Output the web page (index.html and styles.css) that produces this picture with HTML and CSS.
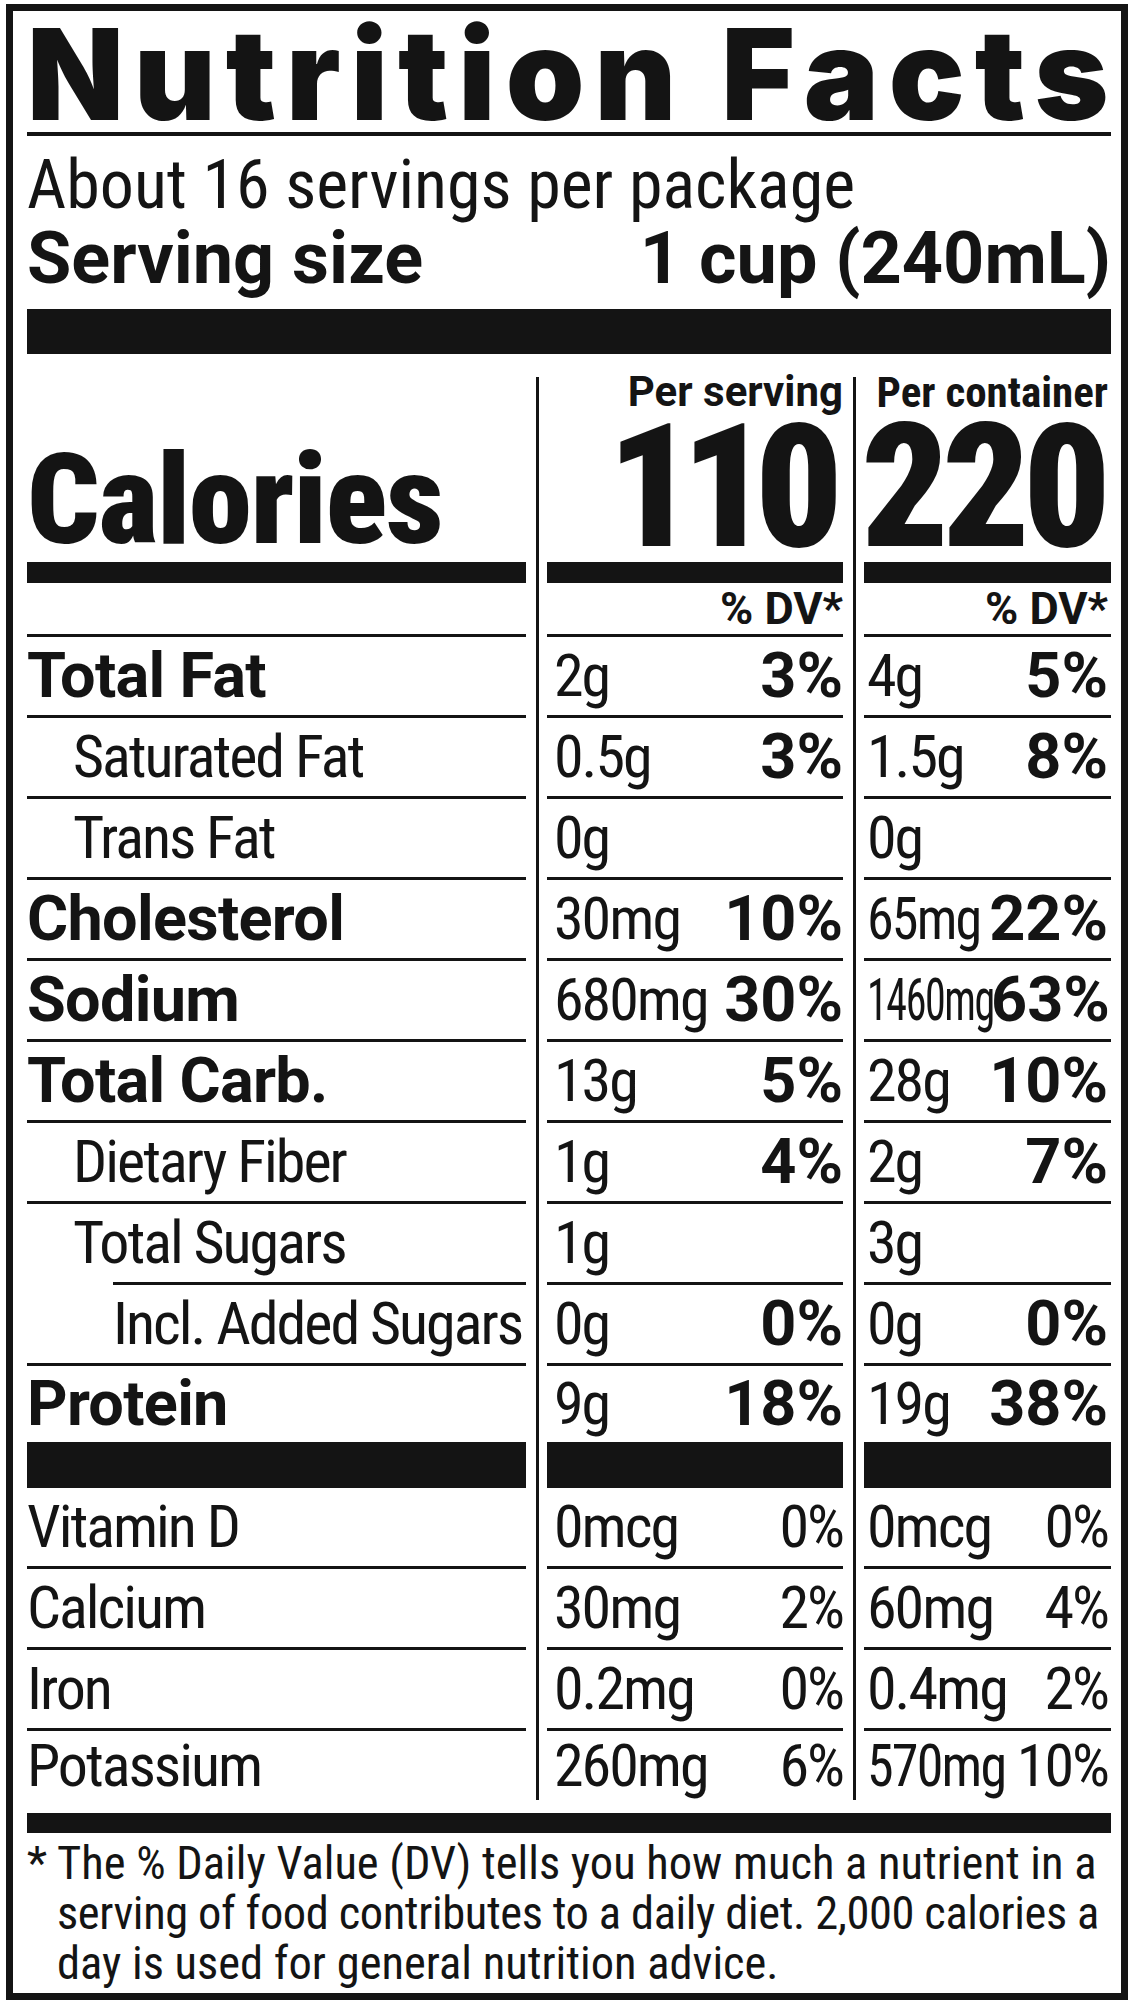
FILE: index.html
```html
<!DOCTYPE html>
<html lang="en">
<head>
<meta charset="utf-8">
<title>Nutrition Facts</title>
<link rel="stylesheet" href="styles.css">
</head>
<body>
<section class="label">
  <h1 class="title">Nutrition Facts</h1>
  <div class="servings">About 16 servings per package</div>
  <div class="size-row"><span>Serving size</span><span>1 cup (240mL)</span></div>
  <div class="bar-xl"></div>

  <div class="table">
    <div class="cell cal-label"><span>Calories</span></div>
    <div class="cell cal"><span class="per">Per serving</span><span class="num n110">110</span></div>
    <div class="cell cal c3"><span class="per pc">Per container</span><span class="num n220">220</span></div>

    <div class="cell dv"></div>
    <div class="cell dv">% DV*</div>
    <div class="cell dv c3">% DV*</div>

    <div class="cell lbl b">Total Fat</div>
    <div class="cell val"><span>2g</span><b>3%</b></div>
    <div class="cell val c3"><span>4g</span><b>5%</b></div>

    <div class="cell lbl ind">Saturated Fat</div>
    <div class="cell val"><span>0.5g</span><b>3%</b></div>
    <div class="cell val c3"><span>1.5g</span><b>8%</b></div>

    <div class="cell lbl ind">Trans Fat</div>
    <div class="cell val"><span>0g</span></div>
    <div class="cell val c3"><span>0g</span></div>

    <div class="cell lbl b">Cholesterol</div>
    <div class="cell val"><span>30mg</span><b>10%</b></div>
    <div class="cell val c3"><span class="sq sq-65">65mg</span><b>22%</b></div>

    <div class="cell lbl b">Sodium</div>
    <div class="cell val"><span>680mg</span><b>30%</b></div>
    <div class="cell val c3"><span class="sq sq-1460">1460mg</span><b>63%</b></div>

    <div class="cell lbl b">Total Carb.</div>
    <div class="cell val"><span>13g</span><b>5%</b></div>
    <div class="cell val c3"><span>28g</span><b>10%</b></div>

    <div class="cell lbl ind">Dietary Fiber</div>
    <div class="cell val"><span>1g</span><b>4%</b></div>
    <div class="cell val c3"><span>2g</span><b>7%</b></div>

    <div class="cell lbl ind partial">Total Sugars</div>
    <div class="cell val"><span>1g</span></div>
    <div class="cell val c3"><span>3g</span></div>

    <div class="cell lbl ind2">Incl. Added Sugars</div>
    <div class="cell val"><span>0g</span><b>0%</b></div>
    <div class="cell val c3"><span>0g</span><b>0%</b></div>

    <div class="cell lbl b protein">Protein</div>
    <div class="cell val protein"><span>9g</span><b>18%</b></div>
    <div class="cell val protein c3"><span>19g</span><b>38%</b></div>

    <div class="cell lbl">Vitamin D</div>
    <div class="cell val"><span>0mcg</span><span>0%</span></div>
    <div class="cell val c3"><span>0mcg</span><span>0%</span></div>

    <div class="cell lbl">Calcium</div>
    <div class="cell val"><span>30mg</span><span>2%</span></div>
    <div class="cell val c3"><span>60mg</span><span>4%</span></div>

    <div class="cell lbl">Iron</div>
    <div class="cell val"><span>0.2mg</span><span>0%</span></div>
    <div class="cell val c3"><span>0.4mg</span><span>2%</span></div>

    <div class="cell lbl last">Potassium</div>
    <div class="cell val last"><span>260mg</span><span>6%</span></div>
    <div class="cell val last c3"><span class="sq sq-570">570mg</span><span>10%</span></div>
  </div>

  <div class="bar-md"></div>
  <div class="foot">
    <span class="ast">*</span>
    <p><span class="l1">The % Daily Value (DV) tells you how much a nutrient in a</span><br><span class="l2">serving of food contributes to a daily diet. 2,000 calories a</span><br><span class="l3">day is used for general nutrition advice.</span></p>
  </div>
</section>
</body>
</html>
```
FILE: styles.css
```css
html, body { margin: 0; padding: 0; background: #fff; }
body { color: #141414; font-family: "Roboto", "Liberation Sans", sans-serif; }

.label {
  box-sizing: border-box;
  width: 1122px;
  height: 1996px;
  margin: 4px 0 0 6px;
  border: 7px solid #141414;
  padding: 8px 10px 10px 14px;
}

.title {
  margin: 0;
  font-family: "Inter", "Roboto", sans-serif;
  font-weight: 900;
  font-size: 126px;
  line-height: 110px;
  letter-spacing: 10px;
  white-space: nowrap;
  border-bottom: 4px solid #141414;
  padding-bottom: 3px;
}

.servings {
  margin-top: 13px;
  font-size: 68px;
  line-height: 72px;
  font-stretch: 75%;
  white-space: nowrap;
}

.size-row {
  margin-top: 2px;
  display: flex;
  justify-content: space-between;
  font-size: 72px;
  line-height: 72px;
  font-weight: 700;
  font-stretch: 98%;
  white-space: nowrap;
}

.bar-xl { height: 45px; background: #141414; margin-top: 14px; }

.table {
  margin-top: 23px;
  display: grid;
  grid-template-columns: 499px 296px 247px;
  column-gap: 21px;
  background:
    linear-gradient(#141414, #141414) no-repeat 509px 0 / 3px 100%,
    linear-gradient(#141414, #141414) no-repeat 826px 0 / 3px 100%;
  font-stretch: 75%;
}

.cell {
  height: 81px;
  box-sizing: border-box;
  border-bottom: 3px solid #141414;
  font-size: 60px;
  letter-spacing: -2px;
  line-height: 78px;
  white-space: nowrap;
}

.c3 { padding-right: 3px; }

.cal-label, .cal {
  height: 206px;
  border-bottom-width: 21px;
  display: flex;
  flex-direction: column;
  justify-content: space-between;
  letter-spacing: 0;
}
.cal-label { justify-content: flex-end; }
.cal-label span {
  font-size: 127px;
  line-height: 125px;
  font-weight: 900;
  letter-spacing: -1px;
}
.cal { align-items: flex-end; }
.cal .per {
  font-size: 42px;
  line-height: 30px;
  font-weight: 700;
  font-stretch: 100%;
}
.cal .per.pc { font-size: 43px; font-stretch: 75%; }
.cal .num {
  font-size: 172px;
  line-height: 150px;
  font-weight: 900;
}
.cal .n110 { letter-spacing: -14px; padding-right: 14px; }
.cal .n220 { letter-spacing: -7px; padding-right: 4px; }

.dv {
  height: 54px;
  font-size: 45px;
  line-height: 51px;
  font-weight: 700;
  font-stretch: 100%;
  letter-spacing: 0;
  text-align: right;
}

.lbl.b { font-size: 63px; font-weight: 700; font-stretch: 90%; letter-spacing: -0.7px; }
.lbl.ind { padding-left: 46px; }
.lbl.ind2 { padding-left: 86px; }

.partial {
  border-bottom-color: transparent;
  background: linear-gradient(#141414, #141414) no-repeat right bottom / calc(100% - 86px) 3px;
  background-origin: border-box;
}

.val {
  display: flex;
  justify-content: space-between;
  padding-left: 7px;
}
.val.c3 { padding-left: 3px; }
.val b { font-size: 63px; font-weight: 700; font-stretch: 90%; letter-spacing: 0; }

.sq {
  display: inline-block;
  transform-origin: left center;
}
.sq-65 { width: 111px; transform: scaleX(0.9); }
.sq-1460 { width: 124px; transform: scaleX(0.7); }
.sq-570 { width: 120px; transform: scaleX(0.9); }

.protein {
  height: 122px;
  border-bottom-width: 46px;
  line-height: 76px;
}

.last {
  height: 69px;
  border-bottom: none;
  line-height: 69px;
}

.bar-md { height: 20px; background: #141414; margin-top: 13px; }

.foot {
  display: flex;
  font-stretch: 75%;
  font-size: 46.5px;
  line-height: 50px;
  margin-top: 5px;
}
.foot .ast { width: 30px; flex: none; }
.foot p { margin: 0; white-space: nowrap; }
.foot .l2 { letter-spacing: -0.4px; }
```
